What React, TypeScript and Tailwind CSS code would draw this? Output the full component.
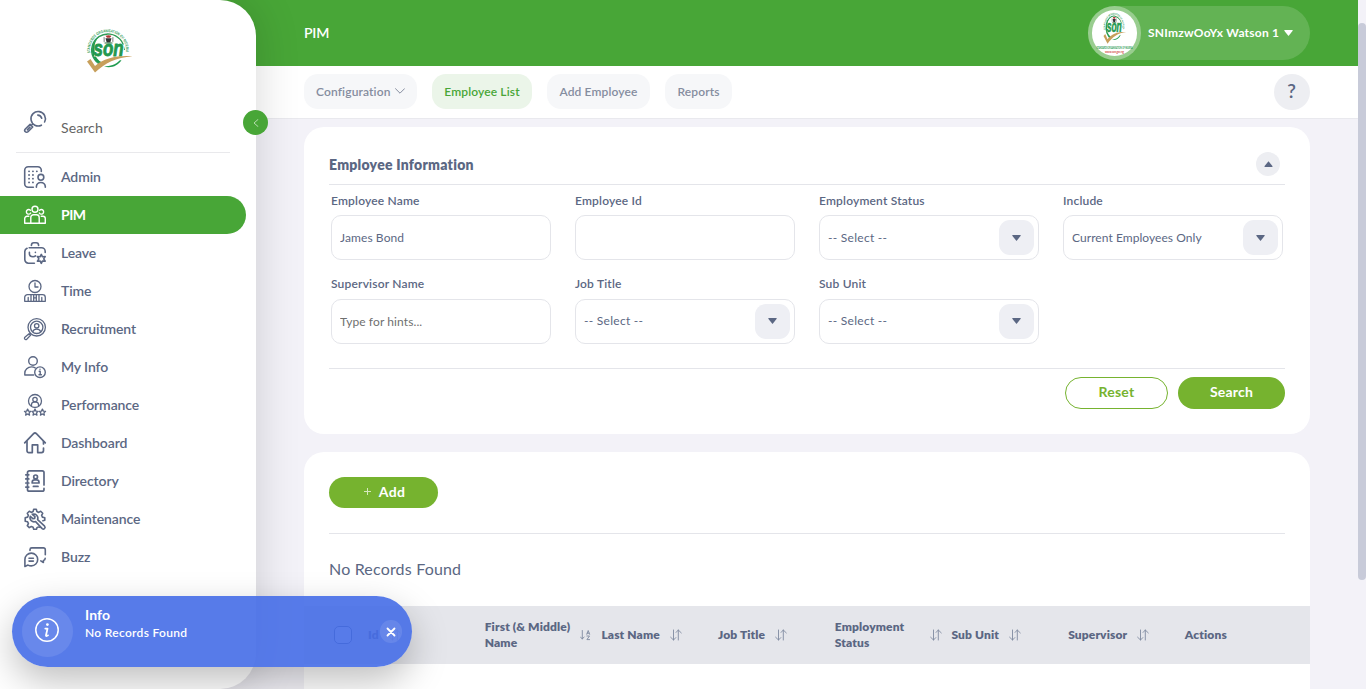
import type { ReactNode } from 'react';

function starPoints(cx: number, cy: number, outer: number, inner: number, tips: number) {
  return Array.from({ length: tips * 2 }, (_, i) => {
    const r = i % 2 === 0 ? outer : inner;
    const a = (Math.PI * i) / tips - Math.PI / 2;
    return `${(cx + r * Math.cos(a)).toFixed(2)},${(cy + r * Math.sin(a)).toFixed(2)}`;
  }).join(' ');
}

function Icon({ children, width = 1.4 }: { children: ReactNode; width?: number }) {
  return (
    <svg
      className="h-[22px] w-[22px] shrink-0 overflow-visible"
      viewBox="0 0 22 22"
      fill="none"
      stroke="currentColor"
      strokeWidth={width}
      strokeLinecap="round"
      strokeLinejoin="round"
    >
      {children}
    </svg>
  );
}

const SearchIcon = () => (
  <Icon width={1.6}>
    <path d="M17.4 14.2A7.2 7.2 0 1 1 20.6 11" />
    <path d="M13.8 4.1a4.4 4.4 0 0 1 3.9 3.1" />
    <path d="M8.6 13.2 7.4 14.4M6.1 13.4 1.3 18a1.9 1.9 0 0 0 2.7 2.7l4.7-4.7-2.6-2.6ZM6 16.2l-2.7 2.6" />
  </Icon>
);

const AdminIcon = () => (
  <Icon width={1.6}>
    <path d="M17.3 5.5V4.2A3.5 3.5 0 0 0 13.8.7H4.2A3.5 3.5 0 0 0 .7 4.2v13.6a3.5 3.5 0 0 0 3.5 3.5h5.2" />
    <path d="M5 5.3h.1M8.9 5.3h.1M12.8 5.3h.1M5 9h.1M8.9 9h.1M5 12.7h.1M8.9 12.7h.1M5 16.4h.1M8.9 16.4h.1" strokeWidth="1.8" />
    <circle cx="16.9" cy="11.3" r="2.9" />
    <path d="M12.4 21.3v-1a4.5 4.5 0 0 1 8.9 0v1" />
  </Icon>
);

const PimIcon = () => (
  <Icon width={1.4}>
    <circle cx="11" cy="5.2" r="3" />
    <path d="M6.7 9A2.3 2.3 0 1 1 6.4 6.3M15.3 9a2.3 2.3 0 1 0 .3-2.7" />
    <path d="M6.8 19.3v-5.8a2.7 2.7 0 0 1 2.7-2.7h3a2.7 2.7 0 0 1 2.7 2.7v5.8" />
    <path d="M4.8 12.3H3a2.3 2.3 0 0 0-2.3 2.3v4.7h20.6v-4.7a2.3 2.3 0 0 0-2.3-2.3h-1.8" />
  </Icon>
);

const LeaveIcon = () => (
  <Icon width={1.6}>
    <path d="M7.4 3.4C7.4 1.8 8.4.8 9.8.8h2.4c1.4 0 2.4 1 2.4 2.6" />
    <path d="M5.2 5.8h12.4a3.6 3.6 0 0 1 3.6 3.6v1M3 6.3A3.6 3.6 0 0 0 .8 9.4v8.2a3.6 3.6 0 0 0 3.6 3.6h6" />
    <path d="M5.4 10.2v1.2c0 2.2 1.7 3.4 3.6 3.4 1 0 1.9-.3 2.5-.9M11.4 10.3v.1" />
    <polygon points={starPoints(17.3, 16.9, 4.5, 2.4, 6)} />
  </Icon>
);

const TimeIcon = () => (
  <Icon width={1.3}>
    <circle cx="11" cy="6.5" r="6" />
    <path d="M11 3v4h3" />
    <path d="M.7 21.3v-3.8a2.8 2.8 0 0 1 2.8-2.8h15a2.8 2.8 0 0 1 2.8 2.8v3.8ZM4.2 21v-3.5M7 21v-6M9.7 14.8V21M12.3 14.8V21M9.7 17.8h2.6M15 21v-6M17.8 21v-3.5" />
  </Icon>
);

const RecruitmentIcon = () => (
  <Icon width={1.3}>
    <circle cx="12.7" cy="9.3" r="8.7" />
    <circle cx="12.7" cy="9.3" r="6.2" />
    <circle cx="12.7" cy="7.8" r="2.2" />
    <path d="M8.9 13.5c.5-1.7 2-2.4 3.8-2.4s3.3.7 3.8 2.4M6.3 15.5l-1.3 1M5 15.8.9 19.3a1.3 1.3 0 0 0 1.8 1.9l4-4.1Z" />
  </Icon>
);

const InfoIcon = () => (
  <Icon width={1.4}>
    <circle cx="9" cy="5" r="4.3" />
    <path d="M9.6 19H.8v-1.7c0-3.8 2.9-6.4 6.7-6.4 1.4 0 2.6.3 3.7.9" />
    <circle cx="16" cy="16.2" r="5.3" />
    <path d="M15.2 15.3h1v3.5M15 18.8h2.4M16 13.2v.1" />
  </Icon>
);

const PerformanceIcon = () => (
  <Icon width={1.3}>
    <circle cx="11" cy="7" r="6.5" />
    <circle cx="11" cy="5.5" r="2.2" />
    <path d="M7.5 12V10.5a2.5 2.5 0 0 1 2.5-2.4h2a2.5 2.5 0 0 1 2.5 2.4V12" />
    <polygon points={starPoints(3.6, 18.4, 3.3, 1.6, 5)} />
    <polygon points={starPoints(11, 18.4, 3.3, 1.6, 5)} />
    <polygon points={starPoints(18.4, 18.4, 3.3, 1.6, 5)} />
  </Icon>
);

const DashboardIcon = () => (
  <Icon width={1.7}>
    <path d="M.7 10.8 9.6 1.7a2 2 0 0 1 2.8 0l8.9 9.1" />
    <path d="M19.5 12V9.6M3 9.5v9.3a1.8 1.8 0 0 0 1.8 1.8h3.5v-7.8h5.4v7.8h3.8a2 2 0 0 0 2-2V16" />
  </Icon>
);

const DirectoryIcon = () => (
  <Icon width={1.7}>
    <path d="M20 15V2.6A1.8 1.8 0 0 0 18.2.8H5.3A1.8 1.8 0 0 0 3.5 2.6v16.8a1.8 1.8 0 0 0 1.8 1.8h12.9A1.8 1.8 0 0 0 20 19.4v-1M1.8 4.8h3M1.8 8.9h3M1.8 13h3M1.8 17.1h3" />
    <circle cx="11.6" cy="6.9" r="1.9" />
    <path d="M8.2 13v-.8c0-1.4 1.2-2.3 2.6-2.3h1.6c1.4 0 2.6.9 2.6 2.3v.8ZM9.4 16.4h4.6" />
  </Icon>
);

const MaintenanceIcon = () => (
  <Icon width={1.6}>
    <path d="M16 19.3c-1.2-.5-2.2-.3-3 .3l-.5 1.7H9.7l-.6-2-1.8-.8-2 1.1-2-2 1.1-2-.8-1.8-2.4-.6V9.7l2.4-.6.8-1.8-1.1-2 2-2 2 1.1 1.8-.8.6-2.4h2.6l.6 2.4 1.8.8 2-1.1 2 2-1.1 2 .8 1.8 2.4.6v2.6l-1.9.5" />
    <path d="M8.3 6.3a4.1 4.1 0 0 1 5.3 5.3l7 6.6a1.7 1.7 0 0 1-2.4 2.4l-6.6-7a4.1 4.1 0 0 1-5.3-5.3l2.5 2.4 1.9-.3.3-1.8Z" />
  </Icon>
);

const BuzzIcon = () => (
  <Icon width={1.6}>
    <path d="M6 4.4V3.6A1.8 1.8 0 0 1 7.8 1.9h11.7a1.8 1.8 0 0 1 1.8 1.8v5M21.2 12.3c0 1.3-.8 2-1.8 2.2v2l-2.6-1.6" />
    <path d="M.9 20.5v-7a6.4 6.4 0 1 1 6.4 6.4c-1.5 0-2.3-.3-3.3-.8Z" />
    <path d="M5 12.3h4.4M5 15.1h4.4" />
  </Icon>
);

const menu = [
  { label: 'Admin', icon: <AdminIcon /> },
  { label: 'PIM', icon: <PimIcon />, active: true },
  { label: 'Leave', icon: <LeaveIcon /> },
  { label: 'Time', icon: <TimeIcon /> },
  { label: 'Recruitment', icon: <RecruitmentIcon /> },
  { label: 'My Info', icon: <InfoIcon /> },
  { label: 'Performance', icon: <PerformanceIcon /> },
  { label: 'Dashboard', icon: <DashboardIcon /> },
  { label: 'Directory', icon: <DirectoryIcon /> },
  { label: 'Maintenance', icon: <MaintenanceIcon /> },
  { label: 'Buzz', icon: <BuzzIcon /> },
];

function LogoMark({ ringId }: { ringId: string }) {
  return (
    <>
      <path id={ringId} d="M4.3 24A17.950 17.950 0 1 1 39.7 24" fill="none" />
      <text fill="#2f9b56" fontSize="4" fontWeight="700" fontFamily="Liberation Sans, sans-serif">
        <textPath href={`#${ringId}`} textLength="61" lengthAdjust="spacingAndGlyphs">STANDARDS ORGANISATION OF NIGERIA</textPath>
      </text>
      <path d="M15.5 36.2A16.3 16.3 0 1 1 38.3 21" fill="none" stroke="#2f9b56" strokeWidth="1.4" />
      <path d="M14 7.2A16.3 16.3 0 0 0 10.5 32.5L15 36l3-1.5A14 14 0 0 1 8.5 20 15 15 0 0 1 14 7.2Z" fill="#1f9a4f" />
      <path d="M18 37.5c7 2 14-.5 17.5-6.500l-2 .6c-4 4.500-9 5.500-15.500 5.900Z" fill="#1f9a4f" />
      <path d="M17.5 8l1.3.3v4.500l-1.200.4ZM27.500 8l-1.300.3v4.500l1.200.4Z" fill="#999" />
      <path d="M19.5 9.2h6l-1.200 4.300h-3.600Z" fill="#2f3433" />
      <path d="M19.5 6.7q3-1 6 0l-1.500 2h-3Z" fill="#b03434" />
      <path d="M18.5 14h8" stroke="#2c6e3f" strokeWidth="1" />
      <path d="M10.5 15.5h29l-3.500 12H8Z" fill="#fff" />
      <text x="7.5" y="27" fill="#23984f" stroke="#23984f" strokeWidth=".9" fontSize="22" fontWeight="700" fontStyle="italic" fontFamily="Liberation Sans, sans-serif" textLength="30" lengthAdjust="spacingAndGlyphs">son</text>
      <path d="M1 32.5 4.5 30l4.500 7C18 29 31 26.200 46.500 27.200 30 28.500 19 34 9 43.500Z" fill="#c79f5b" />
    </>
  );
}

const Caret = ({ up = false }: { up?: boolean }) => (
  <svg className="h-[6px] w-[9px]" viewBox="0 0 10 6" preserveAspectRatio="none" fill="currentColor">
    <path d={up ? 'M5 .2 9.5 5.3q.1.6-.6.6H1.1q-.7 0-.6-.6Z' : 'M5 6 .3.7Q.2 0 .9 0h8.2q.7 0 .6.7Z'} />
  </svg>
);

const SortIcon = () => (
  <svg className="h-3 w-3 shrink-0" viewBox="0 0 12 12" fill="none" stroke="#7f8aa0" strokeWidth=".9" strokeLinecap="round" strokeLinejoin="round">
    <path d="M3.5 1v10M.6 8.2 3.5 11 5.8 8.6M8.3 11V1M6.1 3.4 8.3 1l3 2.9" />
  </svg>
);

const SortAlphaIcon = () => (
  <svg className="h-3 w-3 shrink-0" viewBox="0 0 12 12" fill="none" stroke="#7f8aa0" strokeWidth=".9" strokeLinecap="round" strokeLinejoin="round">
    <path d="M2.3 1.5v8.5M.5 8 2.3 10l1.8-2M6.8 5.3 8.2 1.5 9.6 5.3M7.2 4.2h2M6.9 7h2.6L6.9 10.6h2.7" />
  </svg>
);

const labelStyle = 'h-4 text-[12px] leading-4 font-semibold tracking-[0.18px]';

function Field({ label, value, placeholder }: { label: string; value?: string; placeholder?: string }) {
  return (
    <label className="flex flex-col gap-[6.4px]">
      <span className={labelStyle}>{label}</span>
      <input
        className="h-[45px] w-full rounded-[10px] border border-[#e4e5ea] bg-white px-2 text-[12px] tracking-[0.1px] outline-none placeholder:text-[#6f6f6f]"
        defaultValue={value}
        placeholder={placeholder}
      />
    </label>
  );
}

function SelectField({ label, value }: { label: string; value: string }) {
  return (
    <div className="flex flex-col gap-[6.4px]">
      <span className={labelStyle}>{label}</span>
      <div className="flex h-[45px] items-center justify-between rounded-[10px] border border-[#e4e5ea] pr-1 pl-2 text-[12px]">
        <span className={value.startsWith('--') ? 'tracking-[0.28px]' : 'tracking-[0.06px]'}>{value}</span>
        <span className="flex h-[35px] w-[35px] items-center justify-center rounded-[11px] bg-[#eeeff4]">
          <Caret />
        </span>
      </div>
    </div>
  );
}

const columns = [
  { title: 'Id', sort: <SortIcon /> },
  { title: 'First (& Middle) Name', sort: <SortAlphaIcon />, wrap: true },
  { title: 'Last Name', sort: <SortIcon /> },
  { title: 'Job Title', sort: <SortIcon /> },
  { title: 'Employment Status', sort: <SortIcon />, wrap: true },
  { title: 'Sub Unit', sort: <SortIcon /> },
  { title: 'Supervisor', sort: <SortIcon /> },
  { title: 'Actions' },
];

function Sidebar() {
  return (
    <aside className="absolute inset-y-0 left-0 z-10 flex w-64 flex-col rounded-r-[36px] bg-white shadow-[0_0_45px_rgba(0,0,0,0.16)]">
      <div className="flex h-[103px] pt-[29px] pl-[86px]">
        <svg className="h-[46px] w-12 overflow-visible" viewBox="0 0 48 46">
          <LogoMark ringId="sidebar-ring" />
        </svg>
      </div>
      <div className="mx-4 flex h-[50px] w-[214px] gap-[15px] border-b border-[#e9e9ec] pt-2 pl-2">
        <SearchIcon />
        <span className="pt-[7px] text-[14px] leading-5 tracking-[0.1px] text-[#646464]">Search</span>
      </div>
      <nav className="flex flex-col pt-[5px]">
        {menu.map((item) => (
          <a
            key={item.label}
            className={
              item.active
                ? 'flex h-[38px] w-[246px] items-center gap-[15px] rounded-r-full bg-[#48a637] pl-6 text-[14px] font-bold tracking-[-0.5px] text-white'
                : 'flex h-[38px] w-[246px] items-center gap-[15px] pl-6 text-[14px] font-semibold tracking-[-0.1px]'
            }
          >
            {item.icon}
            <span className="pb-0.5">{item.label}</span>
          </a>
        ))}
      </nav>
      <button className="absolute top-[110px] left-[243px] flex h-[25px] w-[25px] items-center justify-center rounded-full bg-[#48a637]">
        <svg className="h-2 w-[6px]" viewBox="0 0 6 8" fill="none" stroke="#b6dbae" strokeLinecap="round" strokeLinejoin="round">
          <path d="M5 .5 1 4l4 3.5" />
        </svg>
      </button>
    </aside>
  );
}

function Toast() {
  return (
    <div className="absolute top-[596px] left-3 z-20 flex h-[71px] w-[400px] rounded-full bg-[#456de7]/90 p-2.5 text-white shadow-[0_14px_36px_rgba(0,0,0,0.25)]">
      <div className="flex h-[51px] w-[51px] items-center justify-center rounded-full bg-white/10 pr-px pb-[3px]">
        <svg className="h-6 w-6" viewBox="0 0 24 24" fill="none" stroke="currentColor" strokeWidth="1.5" strokeLinecap="round" strokeLinejoin="round">
          <circle cx="12" cy="12" r="11.2" />
          <circle cx="12.4" cy="6.6" r="1.4" fill="currentColor" stroke="none" />
          <path d="M10.3 10.6h2.2l-1.5 6.6c-.2 1 .8 1.1 2 .2" strokeWidth="1.8" />
        </svg>
      </div>
      <div className="flex flex-1 flex-col pl-3">
        <p className="text-[14px] leading-[18px] font-bold tracking-[0.1px]">Info</p>
        <p className="text-[12px] leading-[18px] font-semibold tracking-[0.3px]">No Records Found</p>
      </div>
      <button className="mt-3.5 flex h-[23px] w-[22px] items-center justify-center rounded-full bg-white/10">
        <svg className="h-2 w-2 overflow-visible" viewBox="0 0 8 8" stroke="currentColor" strokeWidth="1.8" strokeLinecap="round">
          <path d="m.5.5 7 7M7.5.5l-7 7" />
        </svg>
      </button>
    </div>
  );
}

export default function App() {
  return (
    <div className="relative flex h-[689px] w-[1366px] overflow-hidden bg-[#f3f2f8] font-[Lato,sans-serif] text-[#5b6783]">
      <Sidebar />
      <div className="flex min-w-0 flex-1 flex-col">
        <header className="flex h-[66px] shrink-0 items-center justify-between bg-[#48a637] pr-12 pl-[304px] text-white">
          <h1 className="pb-0.5 text-[14px] font-semibold tracking-[-0.2px]">PIM</h1>
          <div className="flex h-[54px] w-[222px] items-center rounded-full bg-white/15">
            <div className="flex h-[54px] w-[53px] shrink-0 items-center justify-center rounded-full bg-white/35">
              <div className="flex h-[46px] w-[45px] items-center justify-center rounded-full bg-white">
                <svg className="h-[46px] w-[45px] overflow-visible" viewBox="0 0 45 46">
                  <g transform="translate(11 2.5) scale(.5 .72)">
                    <LogoMark ringId="avatar-ring" />
                  </g>
                  <text x="4.5" y="38.5" fill="#23984f" fontSize="3.4" fontWeight="700" textLength="36" lengthAdjust="spacingAndGlyphs">STANDARDS ORGANISATION OF NIGERIA</text>
                  <text x="13" y="43" fill="#d2463c" fontSize="3" fontWeight="700" textLength="19" lengthAdjust="spacingAndGlyphs">www.son.gov.ng</text>
                </svg>
              </div>
            </div>
            <span className="ml-[7px] text-[12px] font-bold tracking-[0.22px] whitespace-nowrap">SNImzwOoYx Watson 1</span>
            <span className="ml-[5px]"><Caret /></span>
          </div>
        </header>

        <div className="flex h-[53px] shrink-0 items-start justify-between border-b border-[#e9e9ee] bg-white pt-2 pr-12 pl-[304px]">
          <nav className="flex gap-[15px] text-[12px] font-semibold tracking-[0.13px] text-[#858d9f]">
            <a className="flex h-[35px] w-[113px] items-center gap-1 rounded-[14px] bg-[#f6f7f9] pl-3">
              Configuration
              <svg className="mb-0.5 h-[6px] w-[10px]" viewBox="0 0 10 6" fill="none" stroke="currentColor" strokeLinecap="round" strokeLinejoin="round">
                <path d="M.5.7 5 5.2 9.5.7" />
              </svg>
            </a>
            <a className="flex h-[35px] w-[100px] items-center justify-center rounded-[14px] bg-[#ebf5e9] text-[#48a637]">Employee List</a>
            <a className="flex h-[35px] w-[103px] items-center justify-center rounded-[14px] bg-[#f6f7f9]">Add Employee</a>
            <a className="flex h-[35px] w-[67px] items-center justify-center rounded-[14px] bg-[#f6f7f9]">Reports</a>
          </nav>
          <button className="flex h-9 w-9 items-center justify-center rounded-full bg-[#edeef2] pr-px pb-0.5 text-[19px] font-semibold">?</button>
        </div>

        <main className="flex flex-col gap-[18px] pt-2 pr-12 pl-[304px]">
          <section className="flex h-[307px] shrink-0 flex-col rounded-[20px] bg-white px-[25px]">
            <div className="flex h-[58px] items-start justify-between border-b border-[#e4e5ea] pt-[25px] pr-[5px]">
              <h2 className="pt-1 text-[14px] leading-[18px] font-extrabold tracking-[0.25px]">Employee Information</h2>
              <button className="flex h-6 w-6 items-center justify-center rounded-full bg-[#edeef2]"><Caret up /></button>
            </div>
            <div className="grid h-[184px] shrink-0 grid-cols-4 content-start gap-x-6 gap-y-[16.1px] border-b border-[#e4e5ea] px-0.5 pt-[7.9px]">
              <Field label="Employee Name" value="James Bond" />
              <Field label="Employee Id" />
              <SelectField label="Employment Status" value="-- Select --" />
              <SelectField label="Include" value="Current Employees Only" />
              <Field label="Supervisor Name" placeholder="Type for hints..." />
              <SelectField label="Job Title" value="-- Select --" />
              <SelectField label="Sub Unit" value="-- Select --" />
            </div>
            <div className="flex justify-end gap-2.5 pt-2 text-[14px] tracking-[0.2px]">
              <button className="h-8 w-[103px] rounded-full border border-[#76b32f] pb-[3px] font-bold text-[#76b32f]">Reset</button>
              <button className="h-8 w-[107px] rounded-full bg-[#76b32f] pb-[3px] font-bold text-white">Search</button>
            </div>
          </section>

          <section className="flex h-[300px] shrink-0 flex-col rounded-t-[20px] bg-white">
            <div className="mx-[25px] h-[82px] border-b border-[#e4e5ea] pt-[25px]">
              <button className="flex h-[31px] w-[109px] items-center justify-center gap-2 rounded-full bg-[#76b32f] pb-0.5 pl-0.5 text-[14px] font-bold tracking-[0.3px] text-white">
                <svg className="h-[7px] w-[7px]" viewBox="0 0 7 7" stroke="#d5e8bd"><path d="M3.5 0v7M0 3.5h7" /></svg>
                Add
              </button>
            </div>
            <p className="h-[72px] pt-[23px] pl-[25px] text-[16px] leading-6 tracking-[0.18px]">No Records Found</p>
            <div className="grid h-[58px] shrink-0 grid-cols-[64px_repeat(8,116.7px)] items-center bg-[#e5e6eb] text-[12px] leading-4 font-extrabold tracking-[0.13px]">
              <span className="ml-[30px] h-[18px] w-[18px] rounded-[5px] border border-[#4d5a78] bg-white" />
              {columns.map((c) => (
                <div key={c.title} className={c.wrap ? 'flex items-center justify-between pr-[9px]' : 'flex items-center gap-2.5'}>
                  <span className={c.wrap ? 'w-[90px]' : ''}>{c.title}</span>
                  {c.sort}
                </div>
              ))}
            </div>
          </section>
        </main>
      </div>
      <div className="flex w-2 shrink-0 flex-col bg-[#f3f2f8] pt-[23px]">
        <div className="h-[557px] rounded-full bg-[#c8cbd9]" />
      </div>
      <Toast />
    </div>
  );
}
